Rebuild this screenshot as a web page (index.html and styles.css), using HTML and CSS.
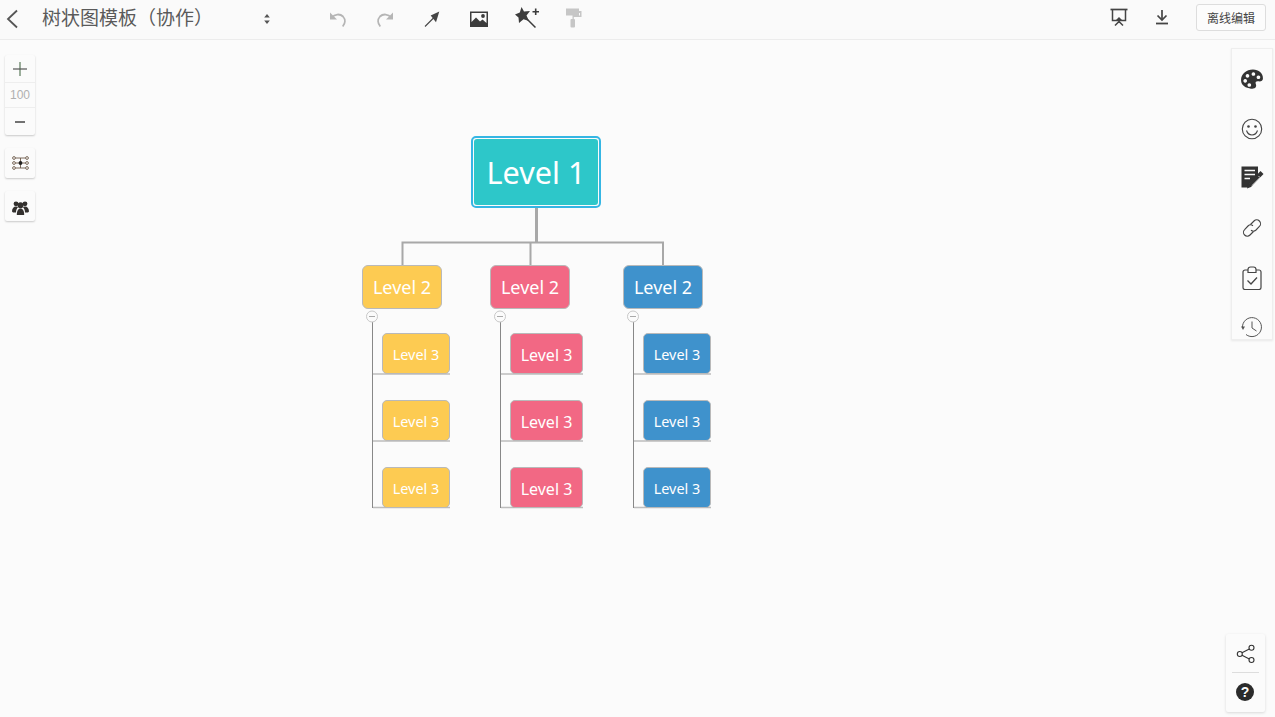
FILE: index.html
```html
<!DOCTYPE html>
<html lang="zh-CN">
<head>
<meta charset="utf-8">
<title>树状图模板（协作）</title>
<link rel="stylesheet" href="styles.css">
</head>
<body>
<header class="topbar">
  <svg class="back" width="14" height="20" viewBox="0 0 14 20"><path d="M12 1.500 3 10l9 8.500" fill="none" stroke="#555" stroke-width="1.800"/></svg>
  <h1 class="title">树状图模板（协作）</h1>
  <svg class="updown" width="8" height="12" viewBox="0 0 8 12"><path d="M4 1 6.800 4.500H1.200zM4 11 1.200 7.500H6.800z" fill="#555"/></svg>
  <div class="tools">
    <svg width="20" height="20" viewBox="0 0 20 20"><path d="M4 7.500C6.500 4 12 3.500 15 6.500c2.800 3 2.300 7-.3 10" fill="none" stroke="#b5b5b5" stroke-width="1.800"/><path d="M2 2.500V9.500H9z" fill="#b5b5b5"/></svg>
    <svg width="20" height="20" viewBox="0 0 20 20"><path d="M16 7.500C13.500 4 8 3.500 5 6.500c-2.800 3-2.300 7 .3 10" fill="none" stroke="#b5b5b5" stroke-width="1.800"/><path d="M18 2.500V9.500H11z" fill="#b5b5b5"/></svg>
    <svg width="20" height="20" viewBox="0 0 20 20"><path d="M3 16.500 12 7.500" stroke="#444" stroke-width="1.100"/><path d="M17.300 1.500 14 12.200 8.700 5.500z" fill="#444"/></svg>
    <svg class="icon-up" width="20" height="18" viewBox="0 0 20 18"><path fill-rule="evenodd" d="M1 1.500H19V17H1zM2.500 3V12L7 7.500l4 4 2.500-2 4 3.500V3z" fill="#3c3c3c"/><circle cx="14" cy="6" r="1.900" fill="#3c3c3c"/></svg>
    <svg class="icon-up" width="26" height="22" viewBox="0 0 26 22"><path d="M6.500 0 9 4.500l6-.5-3.500 4.500 2.500 5.500-5.500-1.700L4 16l-.5-5.500L0 7.500 4.800 5.500z" fill="#3c3c3c"/><path d="M12 12l8.500 8.500" stroke="#3c3c3c" stroke-width="1.500"/><path d="M20.700 1.500v6.500M17.500 4.700h6.500" stroke="#3c3c3c" stroke-width="1.600"/></svg>
    <svg class="roller" width="16" height="20" viewBox="0 0 16 20"><path d="M0 .5h13V3h2.500v6H7.800v2H6.500V7.500H14V5h-1v2.500H0z" fill="#c6c6c6"/><rect x="4.500" y="11" width="4.500" height="8.500" rx="1" fill="#c6c6c6"/></svg>
  </div>
  <div class="topright">
    <svg class="present" width="18" height="18" viewBox="0 0 18 18"><path d="M0.500 1.500H17.500" stroke="#444" stroke-width="1.700"/><path d="M2.500 1.500V12.500H15.500V1.500" fill="none" stroke="#444" stroke-width="1.500"/><path d="M9 12v2M9 13.500 5 17.500M9 13.500l4 4" stroke="#444" stroke-width="1.500" fill="none"/><path d="M5.500 12.500 9 9l3.500 3.500z" fill="#444"/></svg>
    <svg class="download" width="14" height="16" viewBox="0 0 14 16"><path d="M7 1v9" stroke="#444" stroke-width="1.700"/><path d="M2.500 6.500 7 11l4.500-4.500" fill="none" stroke="#444" stroke-width="1.700"/><path d="M1 14.500H13" stroke="#444" stroke-width="1.800"/></svg>
    <button class="offline">离线编辑</button>
  </div>
</header>

<aside class="left-rail">
  <div class="card zoom">
    <div class="zoom-cell"><svg width="14" height="14" viewBox="0 0 14 14"><path d="M7 0V14" stroke="#5a7a5a" stroke-width="1.200"/><path d="M0 7H14" stroke="#555" stroke-width="1.200"/></svg></div>
    <div class="zoom-cell zoom-value">100</div>
    <div class="zoom-cell"><svg width="10" height="2" viewBox="0 0 10 2"><path d="M0 1H10" stroke="#444" stroke-width="1.500"/></svg></div>
  </div>
  <div class="card square"><svg width="17" height="14" viewBox="0 0 17 14"><g fill="none" stroke="#6d5a4a" stroke-width=".9"><circle cx="2" cy="2" r="1.400"/><circle cx="2" cy="7" r="1.400"/><circle cx="2" cy="12" r="1.400"/><circle cx="15" cy="2" r="1.400"/><circle cx="15" cy="7" r="1.400"/><circle cx="15" cy="12" r="1.400"/><path d="M3.400 2H13.600M3.400 7H13.600M3.400 12H13.600M8.500 2V12"/></g><circle cx="8.500" cy="7" r="1.900" fill="#222"/></svg></div>
  <div class="card square people"><svg width="17" height="15" viewBox="0 0 17 15"><g fill="#33302e"><circle cx="4" cy="3.800" r="2.400"/><circle cx="13" cy="3.800" r="2.400"/><path d="M0 11.500c0-3 1.500-5 4-5 1 0 1.600.3 2 .7C4.800 8.500 4 10 4 12.500H1z"/><path d="M17 11.500c0-3-1.500-5-4-5-1 0-1.600.3-2 .7 1.200 1.300 2 2.800 2 5.300h3z"/><circle cx="8.500" cy="5.300" r="3"/><path d="M4.800 15c0-4.300 1.400-6.500 3.700-6.500s3.700 2.200 3.700 6.500z"/></g></svg></div>
</aside>

<aside class="right-rail">
  <svg width="24" height="21" viewBox="0 0 26 23"><path fill-rule="evenodd" fill="#333" d="M14 .5c6.500 0 11 4 11 9.500 0 3-2.500 4-5 3.500-2-.4-3.500.5-3 2.500.5 1.500 1 2.500 0 4-1.200 1.800-4 2-7 1C4 20 1 16.500 1 12 1 5.500 7 .5 14 .5zM8 5.500a2 2 0 1 0 .1 0zM14.500 3.500a2 2 0 1 0 .1 0zM20 7a2 2 0 1 0 .1 0zM5.500 11a2 2 0 1 0 .1 0zM10 15.500a2 2 0 1 0 .1 0z"/></svg>
  <svg width="22" height="22" viewBox="0 0 22 22"><g fill="none" stroke="#444" stroke-width="1.100"><circle cx="11" cy="11" r="9.700"/><path d="M5.500 12.500c1 3 3 4.500 5.500 4.500s4.500-1.500 5.500-4.500"/></g><circle cx="7.500" cy="8.500" r="1.300" fill="#444"/><circle cx="14.500" cy="8.500" r="1.300" fill="#444"/></svg>
  <svg width="24" height="24" viewBox="0 0 24 24"><path d="M1.500 .5H18V9L9.500 17.500 8 21.500H1.500z" fill="#333"/><path d="M4.500 4.500H15M4.500 8.500H15M4.500 12.500H10" stroke="#fafafa" stroke-width="1.300"/><path d="M20.500 5 23.500 8 11 21l-4 1.500 1-4z" fill="#333"/><path d="M18.500 10l1.500 1.500-8 8" stroke="#fafafa" stroke-width=".8" fill="none"/></svg>
  <svg width="22" height="22" viewBox="0 0 22 22"><g fill="none" stroke="#444" stroke-width="1.100"><path d="M9.500 7.500 13 4a3.800 3.800 0 0 1 5.400 5.400L15 13c-1.500 1.500-3.500 1.500-5 .3"/><path d="M12.500 14.500 9 18a3.800 3.800 0 0 1-5.400-5.400L7 9c1.500-1.500 3.500-1.500 5-.3"/></g></svg>
  <svg width="20" height="24" viewBox="0 0 20 24"><g fill="none" stroke="#444" stroke-width="1.200"><path d="M6 4H3a2 2 0 0 0-2 2v15.500a2 2 0 0 0 2 2h14a2 2 0 0 0 2-2V6a2 2 0 0 0-2-2h-3"/><path d="M6 6.500V3.500c0-1.500 1-2.500 2.500-2.500h3C13 1 14 2 14 3.500v3z"/><path d="M5.500 14.500 9 18l6-6.500" stroke-width="1.300"/></g></svg>
  <svg width="22" height="22" viewBox="0 0 22 22"><g fill="none" stroke="#555" stroke-width="1"><path d="M1.500 12A9.500 9.500 0 1 1 5 18.500"/><path d="M11 5.500V12l4.500 3"/></g><path d="M0 10.500H4L2 14z" fill="#555"/></svg>
</aside>

<aside class="help-rail">
  <div class="help-cell share-cell"><svg width="20" height="20" viewBox="0 0 20 20"><g fill="none" stroke="#333" stroke-width="1.100"><circle cx="3.800" cy="10" r="2.500"/><circle cx="15.500" cy="3.800" r="2.500"/><circle cx="15.500" cy="16" r="2.500"/><path d="M6 8.800 13.300 5M6 11.200l7.300 3.700"/></g></svg></div>
  <div class="help-cell question-cell"><span class="question">?</span></div>
</aside>

<main class="canvas">
  <svg class="links" width="1275" height="717" viewBox="0 0 1275 717">
    <g fill="none" stroke="#a8a8a8">
      <path d="M536.500 207V242" stroke-width="3"/>
      <path d="M402.500 265V242.500H663V265M530.500 242.500V265" stroke-width="2"/>
    </g>
    <g fill="none" stroke="#888" stroke-width="1">
      <path d="M372.500 322V508"/><path d="M500.500 322V508"/><path d="M633.500 322V508"/>
    </g>
    <g fill="none" stroke="#bdbdbd" stroke-width="1.600">
      <path d="M373 374H450M373 441H450M373 507.500H450"/>
      <path d="M501 374H583M501 441H583M501 507.500H583"/>
      <path d="M634 374H711M634 441H711M634 507.500H711"/>
    </g>
    <g fill="#fbfbfb" stroke="#c8c8c8" stroke-width="1">
      <circle cx="372" cy="316.500" r="5.500"/><circle cx="500" cy="316.500" r="5.500"/><circle cx="633" cy="316.500" r="5.500"/>
    </g>
    <path d="M369 316.500H375M497 316.500H503M630 316.500H636" stroke="#aaa" stroke-width="1"/>
  </svg>

  <div class="root-frame"><div class="node root">Level 1</div></div>

  <div class="node l2 yellow n-a">Level 2</div>
  <div class="node l2 pink n-b">Level 2</div>
  <div class="node l2 blue n-c">Level 2</div>

  <div class="node l3 yellow a r1">Level 3</div>
  <div class="node l3 yellow a r2">Level 3</div>
  <div class="node l3 yellow a r3">Level 3</div>
  <div class="node l3 pink b r1">Level 3</div>
  <div class="node l3 pink b r2">Level 3</div>
  <div class="node l3 pink b r3">Level 3</div>
  <div class="node l3 blue c r1">Level 3</div>
  <div class="node l3 blue c r2">Level 3</div>
  <div class="node l3 blue c r3">Level 3</div>
</main>
</body>
</html>
```
FILE: styles.css
```css
* { box-sizing: border-box; }
html, body { margin: 0; height: 100%; overflow: hidden; }
body {
  background: #fbfbfb;
  font-family: "Roboto", "Noto Sans CJK SC", sans-serif;
  color: #444;
  position: relative;
  width: 1275px;
  height: 717px;
}

.topbar {
  height: 40px;
  display: flex;
  align-items: center;
  background: #fafafa;
  border-bottom: 1px solid #ececec;
  position: relative;
  z-index: 2;
}
.back { margin: 0 0 2px 5px; flex: none; }
.title {
  margin: 0 0 6px 23px;
  width: 220px;
  font-weight: 400;
  font-size: 19px;
  line-height: 28px;
  color: #5a5a5a;
  font-family: "Noto Sans CJK SC", sans-serif;
  white-space: nowrap;
}
.updown { flex: none; margin: 0 0 2px 1px; }
.tools {
  display: flex;
  align-items: center;
  gap: 27px;
  margin-left: 57px;
}
.icon-up { margin-top: -2px; }
.icon-up + .icon-up { margin-top: -4px; margin-left: -1px; }
.roller { margin: -3px 0 0 -2px; }
.topright {
  margin: 0 9px 5px auto;
  display: flex;
  align-items: center;
}
.present { margin-right: 27px; }
.download { margin-right: 27px; }
.offline {
  width: 70px;
  height: 27px;
  padding: 0;
  background: #fcfcfc;
  border: 1px solid #ddd;
  border-radius: 3px;
  font-size: 12px;
  color: #444;
  font-family: "Noto Sans CJK SC", sans-serif;
}

.left-rail {
  position: absolute;
  left: 5px;
  top: 55px;
  width: 30px;
  display: flex;
  flex-direction: column;
  gap: 13px;
  z-index: 2;
}
.card {
  background: #fbfbfb;
  border-radius: 2px;
  box-shadow: 0 1px 2px rgba(0, 0, 0, .2);
}
.zoom { display: flex; flex-direction: column; }
.zoom-cell {
  height: 27px;
  display: flex;
  align-items: center;
  justify-content: center;
}
.zoom-value {
  height: 26px;
  font-family: "Liberation Sans", sans-serif;
  font-size: 12px;
  color: #b0b0b0;
  border-top: 1px solid #eee;
  border-bottom: 1px solid #eee;
}
.square {
  height: 30px;
  display: flex;
  align-items: center;
  justify-content: center;
}
.people { padding-top: 3px; }

.right-rail {
  position: absolute;
  left: 1231px;
  top: 48px;
  width: 42px;
  height: 292px;
  padding-top: 5.500px;
  display: grid;
  grid-auto-rows: 49.600px;
  place-items: center;
  background: #fbfbfb;
  border: 1px solid #eee;
  box-shadow: 0 1px 2px rgba(0, 0, 0, .08);
  overflow: hidden;
  z-index: 2;
}

.help-rail {
  position: absolute;
  left: 1226px;
  top: 634px;
  width: 39px;
  height: 78px;
  display: flex;
  flex-direction: column;
  background: #fbfbfb;
  border-radius: 2px;
  box-shadow: 0 1px 3px rgba(0, 0, 0, .14);
  z-index: 2;
}
.help-cell {
  display: flex;
  align-items: center;
  justify-content: center;
}
.share-cell {
  height: 39px;
  margin: 0 6px;
  padding-top: 2px;
  border-bottom: 1px solid #ddd;
}
.question-cell { height: 37px; margin-left: -1px; }
.question {
  width: 18px;
  height: 18px;
  border-radius: 50%;
  background: #2b2b2b;
  color: #fbfbfb;
  font: 700 14px/18px "Liberation Sans", sans-serif;
  text-align: center;
}

.canvas { position: absolute; inset: 0; z-index: 1; }
.links { position: absolute; left: 0; top: 0; }

.root-frame {
  position: absolute;
  left: 471px;
  top: 136px;
  width: 130px;
  height: 72px;
  padding: 1px;
  border: 2px solid #35b6e4;
  border-radius: 5px;
  background: #fbfbfb;
}
.node {
  display: flex;
  align-items: center;
  justify-content: center;
  color: #fff;
  border-radius: 5px;
  font-family: "Noto Sans", "Open Sans", sans-serif;
  white-space: nowrap;
}
.root {
  width: 100%;
  height: 100%;
  background: #2dc7c9;
  font-size: 30.600px;
  border-radius: 3px;
}
.l2, .l3 { position: absolute; border: 1px solid #b9b9b9; }
.l2 { width: 80px; height: 44px; top: 265px; font-size: 18px; border-radius: 6px; }
.l3 { height: 41px; width: 68px; padding-top: 2px; font-size: 14.400px; border-radius: 5px; }
.yellow { background: #fdcb52; }
.pink { background: #f26884; }
.blue { background: #3f92cc; }
.n-a { left: 362px; }
.n-b { left: 490px; }
.n-c { left: 623px; }
.a { left: 382px; }
.b { left: 510px; width: 73px; font-size: 16px; }
.l2.pink { font-size: 18px; }
.c { left: 643px; }
.r1 { top: 333px; }
.r2 { top: 400px; }
.r3 { top: 467px; }
```
